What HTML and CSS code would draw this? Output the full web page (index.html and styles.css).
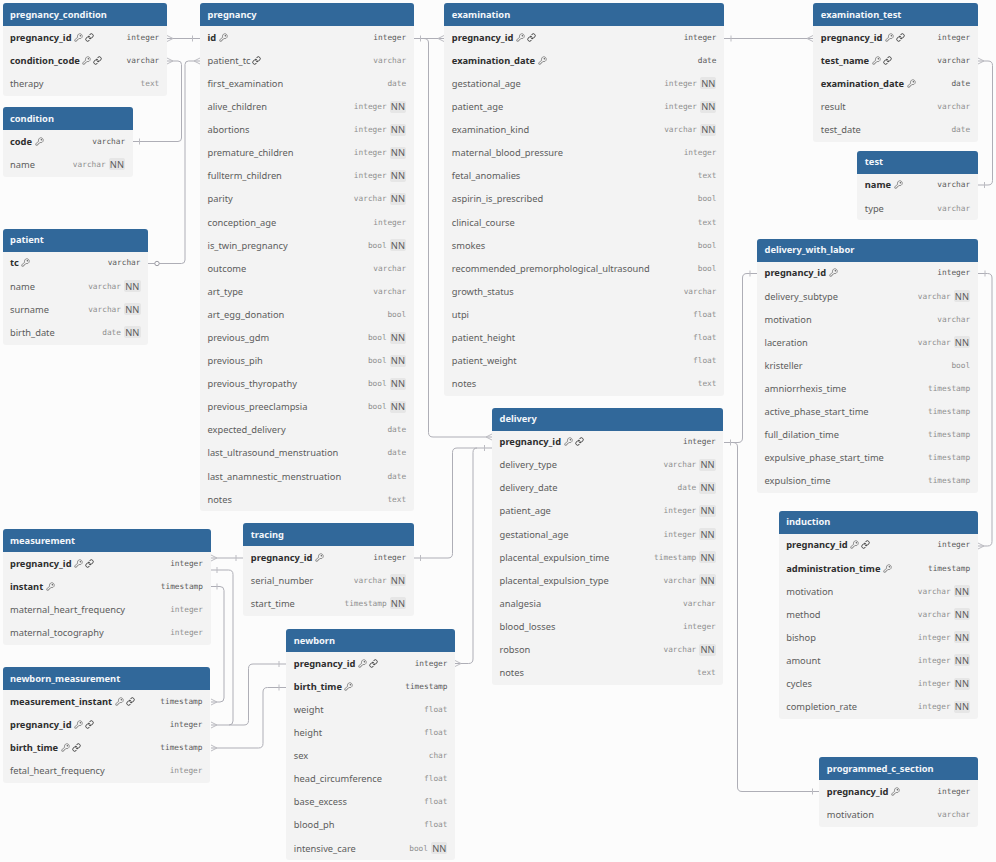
FILE: index.html
```html
<!DOCTYPE html>
<html lang="en">
<head>
<meta charset="utf-8">
<title>Schema diagram</title>
<link rel="stylesheet" href="styles.css">
</head>
<body>
<svg class="defs" width="0" height="0" aria-hidden="true">
  <symbol id="key" viewBox="0 0 24 24"><path d="M2.586 17.414A2 2 0 0 0 2 18.828V21a1 1 0 0 0 1 1h3a1 1 0 0 0 1-1v-1a1 1 0 0 1 1-1h1a1 1 0 0 0 1-1v-1a1 1 0 0 1 1-1h.172a2 2 0 0 0 1.414-.586l.814-.814a6.5 6.5 0 1 0-4-4z"/><circle cx="16.5" cy="7.5" r="1"/></symbol>
  <symbol id="link" viewBox="0 0 24 24"><path d="M10 13a5 5 0 0 0 7.54.54l3-3a5 5 0 0 0-7.07-7.07l-1.72 1.71"/><path d="M14 11a5 5 0 0 0-7.54-.54l-3 3a5 5 0 0 0 7.07 7.07l1.71-1.71"/></symbol>
</svg>
<main class="canvas">
<svg class="edges" viewBox="0 0 996 862" width="996" height="862" aria-hidden="true">
  <g class="ln">
    <path d="M167 38.5H200"/>
    <path d="M167 61H178Q181.5 61 181.5 64.5V138Q181.5 141.5 178 141.5H133"/>
    <path d="M148 263.5H181.5Q185 263.5 185 260V64.5Q185 61 188.5 61H200"/>
    <path d="M414 38.5H444"/>
    <path d="M424 38.5Q428.5 38.5 428.5 43V432.5Q428.5 437 433 437H492"/>
    <path d="M724 38.5H813"/>
    <path d="M978 61H988Q992.5 61 992.5 65.5V180.5Q992.5 185 988 185H978"/>
    <path d="M414 558H448Q452.5 558 452.5 553.5V452.5Q452.5 448 457 448H492"/>
    <path d="M211 558H243"/>
    <path d="M211 570H228.5Q233 570 233 574.5V721Q233 725 229 725"/>
    <path d="M211 725H244Q248.5 725 248.5 720.5V668.5Q248.5 664 253 664H286"/>
    <path d="M211 586.500H220Q224 586.500 224 590.500V698Q224 702 220 702H211"/>
    <path d="M211 748H258.500Q263 748 263 743.500V692Q263 687.500 267.500 687.500H286"/>
    <path d="M455 663.500H468.500Q473 663.500 473 659V452.500Q473 448 477 448"/>
    <path d="M724 442.500H738Q742.500 442.500 742.500 438V278Q742.500 273.500 747 273.500H757"/>
    <path d="M733 442.500Q737.500 442.500 737.500 447V787Q737.500 791.500 742 791.500H819"/>
    <path d="M978 273.500H987.500Q992 273.500 992 278V541.500Q992 546 987.500 546H978"/>
  </g>
  <g class="mk">
    <path d="M167 35.500L173 38.500L167 41.500"/><path d="M192.500 35.500V41.500"/>
    <path d="M167 58L173 61L167 64"/><path d="M139.500 138.500V144.500"/>
    <path d="M200 58L194 61L200 64"/>
    <path d="M420.500 35.500V41.500"/><path d="M444 35.500L438 38.500L444 41.500"/>
    <path d="M492 434L486 437L492 440"/>
    <path d="M731 35.500V41.500"/><path d="M813 35.500L807 38.500L813 41.500"/>
    <path d="M978 58L984 61L978 64"/><path d="M984.500 182V188"/>
    <path d="M420.500 555V561"/><path d="M484.500 445V451"/>
    <path d="M211 555L217 558L211 561"/><path d="M236 555V561"/>
    <path d="M217 567V573"/>
    <path d="M211 722L217 725L211 728"/><path d="M279 661V667"/>
    <path d="M217 583.500V589.500"/>
    <path d="M211 699L217 702L211 705"/>
    <path d="M211 745L217 748L211 751"/><path d="M279 684.500V690.500"/>
    <path d="M455 660.500L461 663.500L455 666.500"/>
    <path d="M730.500 439.500V445.500"/><path d="M750 270.500V276.500"/>
    <path d="M812.500 788.500V794.500"/>
    <path d="M985 270.500V276.500"/>
    <path d="M978 543L984 546L978 549"/>
  </g>
  <circle class="opt" cx="157" cy="263.500" r="2.200"/>
</svg>

<section class="tbl t-pc"><h2 class="hd">pregnancy_condition</h2>
  <div class="row pk"><span class="nm">pregnancy_id<svg class="ic"><use href="#key"/></svg><svg class="ic lk"><use href="#link"/></svg></span><span class="ty">integer</span></div>
  <div class="row pk"><span class="nm">condition_code<svg class="ic"><use href="#key"/></svg><svg class="ic lk"><use href="#link"/></svg></span><span class="ty">varchar</span></div>
  <div class="row"><span class="nm">therapy</span><span class="ty">text</span></div>
</section>

<section class="tbl t-cond"><h2 class="hd">condition</h2>
  <div class="row pk"><span class="nm">code<svg class="ic"><use href="#key"/></svg></span><span class="ty">varchar</span></div>
  <div class="row"><span class="nm">name</span><span class="ty">varchar</span><span class="nn">NN</span></div>
</section>

<section class="tbl t-pat"><h2 class="hd">patient</h2>
  <div class="row pk"><span class="nm">tc<svg class="ic"><use href="#key"/></svg></span><span class="ty">varchar</span></div>
  <div class="row"><span class="nm">name</span><span class="ty">varchar</span><span class="nn">NN</span></div>
  <div class="row"><span class="nm">surname</span><span class="ty">varchar</span><span class="nn">NN</span></div>
  <div class="row"><span class="nm">birth_date</span><span class="ty">date</span><span class="nn">NN</span></div>
</section>

<section class="tbl t-preg"><h2 class="hd">pregnancy</h2>
  <div class="row pk"><span class="nm">id<svg class="ic"><use href="#key"/></svg></span><span class="ty">integer</span></div>
  <div class="row"><span class="nm">patient_tc<svg class="ic lk"><use href="#link"/></svg></span><span class="ty">varchar</span></div>
  <div class="row"><span class="nm">first_examination</span><span class="ty">date</span></div>
  <div class="row"><span class="nm">alive_children</span><span class="ty">integer</span><span class="nn">NN</span></div>
  <div class="row"><span class="nm">abortions</span><span class="ty">integer</span><span class="nn">NN</span></div>
  <div class="row"><span class="nm">premature_children</span><span class="ty">integer</span><span class="nn">NN</span></div>
  <div class="row"><span class="nm">fullterm_children</span><span class="ty">integer</span><span class="nn">NN</span></div>
  <div class="row"><span class="nm">parity</span><span class="ty">varchar</span><span class="nn">NN</span></div>
  <div class="row"><span class="nm">conception_age</span><span class="ty">integer</span></div>
  <div class="row"><span class="nm">is_twin_pregnancy</span><span class="ty">bool</span><span class="nn">NN</span></div>
  <div class="row"><span class="nm">outcome</span><span class="ty">varchar</span></div>
  <div class="row"><span class="nm">art_type</span><span class="ty">varchar</span></div>
  <div class="row"><span class="nm">art_egg_donation</span><span class="ty">bool</span></div>
  <div class="row"><span class="nm">previous_gdm</span><span class="ty">bool</span><span class="nn">NN</span></div>
  <div class="row"><span class="nm">previous_pih</span><span class="ty">bool</span><span class="nn">NN</span></div>
  <div class="row"><span class="nm">previous_thyropathy</span><span class="ty">bool</span><span class="nn">NN</span></div>
  <div class="row"><span class="nm">previous_preeclampsia</span><span class="ty">bool</span><span class="nn">NN</span></div>
  <div class="row"><span class="nm">expected_delivery</span><span class="ty">date</span></div>
  <div class="row"><span class="nm">last_ultrasound_menstruation</span><span class="ty">date</span></div>
  <div class="row"><span class="nm">last_anamnestic_menstruation</span><span class="ty">date</span></div>
  <div class="row"><span class="nm">notes</span><span class="ty">text</span></div>
</section>

<section class="tbl t-exam"><h2 class="hd">examination</h2>
  <div class="row pk"><span class="nm">pregnancy_id<svg class="ic"><use href="#key"/></svg><svg class="ic lk"><use href="#link"/></svg></span><span class="ty">integer</span></div>
  <div class="row pk"><span class="nm">examination_date<svg class="ic"><use href="#key"/></svg></span><span class="ty">date</span></div>
  <div class="row"><span class="nm">gestational_age</span><span class="ty">integer</span><span class="nn">NN</span></div>
  <div class="row"><span class="nm">patient_age</span><span class="ty">integer</span><span class="nn">NN</span></div>
  <div class="row"><span class="nm">examination_kind</span><span class="ty">varchar</span><span class="nn">NN</span></div>
  <div class="row"><span class="nm">maternal_blood_pressure</span><span class="ty">integer</span></div>
  <div class="row"><span class="nm">fetal_anomalies</span><span class="ty">text</span></div>
  <div class="row"><span class="nm">aspirin_is_prescribed</span><span class="ty">bool</span></div>
  <div class="row"><span class="nm">clinical_course</span><span class="ty">text</span></div>
  <div class="row"><span class="nm">smokes</span><span class="ty">bool</span></div>
  <div class="row"><span class="nm">recommended_premorphological_ultrasound</span><span class="ty">bool</span></div>
  <div class="row"><span class="nm">growth_status</span><span class="ty">varchar</span></div>
  <div class="row"><span class="nm">utpi</span><span class="ty">float</span></div>
  <div class="row"><span class="nm">patient_height</span><span class="ty">float</span></div>
  <div class="row"><span class="nm">patient_weight</span><span class="ty">float</span></div>
  <div class="row"><span class="nm">notes</span><span class="ty">text</span></div>
</section>

<section class="tbl t-et"><h2 class="hd">examination_test</h2>
  <div class="row pk"><span class="nm">pregnancy_id<svg class="ic"><use href="#key"/></svg><svg class="ic lk"><use href="#link"/></svg></span><span class="ty">integer</span></div>
  <div class="row pk"><span class="nm">test_name<svg class="ic"><use href="#key"/></svg><svg class="ic lk"><use href="#link"/></svg></span><span class="ty">varchar</span></div>
  <div class="row pk"><span class="nm">examination_date<svg class="ic"><use href="#key"/></svg></span><span class="ty">date</span></div>
  <div class="row"><span class="nm">result</span><span class="ty">varchar</span></div>
  <div class="row"><span class="nm">test_date</span><span class="ty">date</span></div>
</section>

<section class="tbl t-test"><h2 class="hd">test</h2>
  <div class="row pk"><span class="nm">name<svg class="ic"><use href="#key"/></svg></span><span class="ty">varchar</span></div>
  <div class="row"><span class="nm">type</span><span class="ty">varchar</span></div>
</section>

<section class="tbl t-dwl"><h2 class="hd">delivery_with_labor</h2>
  <div class="row pk"><span class="nm">pregnancy_id<svg class="ic"><use href="#key"/></svg></span><span class="ty">integer</span></div>
  <div class="row"><span class="nm">delivery_subtype</span><span class="ty">varchar</span><span class="nn">NN</span></div>
  <div class="row"><span class="nm">motivation</span><span class="ty">varchar</span></div>
  <div class="row"><span class="nm">laceration</span><span class="ty">varchar</span><span class="nn">NN</span></div>
  <div class="row"><span class="nm">kristeller</span><span class="ty">bool</span></div>
  <div class="row"><span class="nm">amniorrhexis_time</span><span class="ty">timestamp</span></div>
  <div class="row"><span class="nm">active_phase_start_time</span><span class="ty">timestamp</span></div>
  <div class="row"><span class="nm">full_dilation_time</span><span class="ty">timestamp</span></div>
  <div class="row"><span class="nm">expulsive_phase_start_time</span><span class="ty">timestamp</span></div>
  <div class="row"><span class="nm">expulsion_time</span><span class="ty">timestamp</span></div>
</section>

<section class="tbl t-del"><h2 class="hd">delivery</h2>
  <div class="row pk"><span class="nm">pregnancy_id<svg class="ic"><use href="#key"/></svg><svg class="ic lk"><use href="#link"/></svg></span><span class="ty">integer</span></div>
  <div class="row"><span class="nm">delivery_type</span><span class="ty">varchar</span><span class="nn">NN</span></div>
  <div class="row"><span class="nm">delivery_date</span><span class="ty">date</span><span class="nn">NN</span></div>
  <div class="row"><span class="nm">patient_age</span><span class="ty">integer</span><span class="nn">NN</span></div>
  <div class="row"><span class="nm">gestational_age</span><span class="ty">integer</span><span class="nn">NN</span></div>
  <div class="row"><span class="nm">placental_expulsion_time</span><span class="ty">timestamp</span><span class="nn">NN</span></div>
  <div class="row"><span class="nm">placental_expulsion_type</span><span class="ty">varchar</span><span class="nn">NN</span></div>
  <div class="row"><span class="nm">analgesia</span><span class="ty">varchar</span></div>
  <div class="row"><span class="nm">blood_losses</span><span class="ty">integer</span></div>
  <div class="row"><span class="nm">robson</span><span class="ty">varchar</span><span class="nn">NN</span></div>
  <div class="row"><span class="nm">notes</span><span class="ty">text</span></div>
</section>

<section class="tbl t-ind"><h2 class="hd">induction</h2>
  <div class="row pk"><span class="nm">pregnancy_id<svg class="ic"><use href="#key"/></svg><svg class="ic lk"><use href="#link"/></svg></span><span class="ty">integer</span></div>
  <div class="row pk"><span class="nm">administration_time<svg class="ic"><use href="#key"/></svg></span><span class="ty">timestamp</span></div>
  <div class="row"><span class="nm">motivation</span><span class="ty">varchar</span><span class="nn">NN</span></div>
  <div class="row"><span class="nm">method</span><span class="ty">varchar</span><span class="nn">NN</span></div>
  <div class="row"><span class="nm">bishop</span><span class="ty">integer</span><span class="nn">NN</span></div>
  <div class="row"><span class="nm">amount</span><span class="ty">integer</span><span class="nn">NN</span></div>
  <div class="row"><span class="nm">cycles</span><span class="ty">integer</span><span class="nn">NN</span></div>
  <div class="row"><span class="nm">completion_rate</span><span class="ty">integer</span><span class="nn">NN</span></div>
</section>

<section class="tbl t-pcs"><h2 class="hd">programmed_c_section</h2>
  <div class="row pk"><span class="nm">pregnancy_id<svg class="ic"><use href="#key"/></svg></span><span class="ty">integer</span></div>
  <div class="row"><span class="nm">motivation</span><span class="ty">varchar</span></div>
</section>

<section class="tbl t-tr"><h2 class="hd">tracing</h2>
  <div class="row pk"><span class="nm">pregnancy_id<svg class="ic"><use href="#key"/></svg></span><span class="ty">integer</span></div>
  <div class="row"><span class="nm">serial_number</span><span class="ty">varchar</span><span class="nn">NN</span></div>
  <div class="row"><span class="nm">start_time</span><span class="ty">timestamp</span><span class="nn">NN</span></div>
</section>

<section class="tbl t-meas"><h2 class="hd">measurement</h2>
  <div class="row pk"><span class="nm">pregnancy_id<svg class="ic"><use href="#key"/></svg><svg class="ic lk"><use href="#link"/></svg></span><span class="ty">integer</span></div>
  <div class="row pk"><span class="nm">instant<svg class="ic"><use href="#key"/></svg></span><span class="ty">timestamp</span></div>
  <div class="row"><span class="nm">maternal_heart_frequency</span><span class="ty">integer</span></div>
  <div class="row"><span class="nm">maternal_tocography</span><span class="ty">integer</span></div>
</section>

<section class="tbl t-nm"><h2 class="hd">newborn_measurement</h2>
  <div class="row pk"><span class="nm">measurement_instant<svg class="ic"><use href="#key"/></svg><svg class="ic lk"><use href="#link"/></svg></span><span class="ty">timestamp</span></div>
  <div class="row pk"><span class="nm">pregnancy_id<svg class="ic"><use href="#key"/></svg><svg class="ic lk"><use href="#link"/></svg></span><span class="ty">integer</span></div>
  <div class="row pk"><span class="nm">birth_time<svg class="ic"><use href="#key"/></svg><svg class="ic lk"><use href="#link"/></svg></span><span class="ty">timestamp</span></div>
  <div class="row"><span class="nm">fetal_heart_frequency</span><span class="ty">integer</span></div>
</section>

<section class="tbl t-nb"><h2 class="hd">newborn</h2>
  <div class="row pk"><span class="nm">pregnancy_id<svg class="ic"><use href="#key"/></svg><svg class="ic lk"><use href="#link"/></svg></span><span class="ty">integer</span></div>
  <div class="row pk"><span class="nm">birth_time<svg class="ic"><use href="#key"/></svg></span><span class="ty">timestamp</span></div>
  <div class="row"><span class="nm">weight</span><span class="ty">float</span></div>
  <div class="row"><span class="nm">height</span><span class="ty">float</span></div>
  <div class="row"><span class="nm">sex</span><span class="ty">char</span></div>
  <div class="row"><span class="nm">head_circumference</span><span class="ty">float</span></div>
  <div class="row"><span class="nm">base_excess</span><span class="ty">float</span></div>
  <div class="row"><span class="nm">blood_ph</span><span class="ty">float</span></div>
  <div class="row"><span class="nm">intensive_care</span><span class="ty">bool</span><span class="nn">NN</span></div>
</section>
</main>
</body>
</html>
```
FILE: styles.css
```css
* { box-sizing: border-box; }
html, body { margin: 0; padding: 0; background: #fcfcfc; overflow: hidden; }
.defs { position: absolute; }
.canvas { position: relative; width: 996px; height: 862px; font-family: "Noto Sans", sans-serif; }
.edges { position: absolute; left: 0; top: 0; }
.ln path, .mk path { fill: none; stroke: #aeaeb6; stroke-width: 1; }
.mk path { stroke: #bcbcc2; }
.opt { fill: #fcfcfc; stroke: #9c9ca4; stroke-width: 1; }

.tbl { position: absolute; background: #f3f3f3; border-radius: 3px; overflow: hidden; }
.hd { margin: 0; height: 23.2px; padding: 0 7.5px 1.5px; display: flex; align-items: center; background: #31689a; color: #f4f7fa; font-size: 9.3px; font-weight: 700; letter-spacing: 0; }
.row { height: 23.1px; padding: 0 7.5px 1.5px; display: flex; align-items: center; color: #5c5c5c; }
.nm { flex: 1; min-width: 0; display: flex; align-items: center; font-size: 9.3px; white-space: nowrap; }
.ty { font-family: "DejaVu Sans Mono", monospace; font-size: 7.8px; color: #8f8f8f; }
.nn { margin-left: 3px; width: 16.5px; height: 12px; display: flex; align-items: center; justify-content: center; background: #e6e6e6; border-radius: 2px; font-size: 9.3px; color: #5c5c5c; }
.pk { color: #2e2e2e; }
.pk .nm { font-weight: 700; }
.pk .ty { color: #5a5a5a; }
.ic { width: 9px; height: 9px; margin-left: 2.5px; fill: none; stroke: #4a4a4a; stroke-width: 1.5; stroke-linecap: round; stroke-linejoin: round; flex: none; }
.lk { stroke: #333; stroke-width: 2.4; margin-left: 2px; }

.t-pc { left: 2.5px; top: 3.3px; width: 164.3px; }
.t-cond { left: 2.5px; top: 107.3px; width: 130.2px; }
.t-pat { left: 2.5px; top: 229px; width: 145.5px; }
.t-preg { left: 200px; top: 3.3px; width: 213.7px; }
.t-exam { left: 444.3px; top: 3.3px; width: 279.7px; }
.t-et { left: 813.3px; top: 3.3px; width: 164.4px; }
.t-test { left: 857.3px; top: 151px; width: 120.4px; }
.t-dwl { left: 757px; top: 239px; width: 220.7px; }
.t-del { left: 492px; top: 407.7px; width: 231.3px; }
.t-ind { left: 778.7px; top: 511px; width: 199px; }
.t-pcs { left: 819.3px; top: 757.3px; width: 158.4px; }
.t-tr { left: 243.3px; top: 523.3px; width: 170.4px; }
.t-meas { left: 2.5px; top: 529.3px; width: 208px; }
.t-nm { left: 2.5px; top: 667.3px; width: 207.5px; }
.t-nb { left: 286.3px; top: 629.3px; width: 168.7px; }
```
